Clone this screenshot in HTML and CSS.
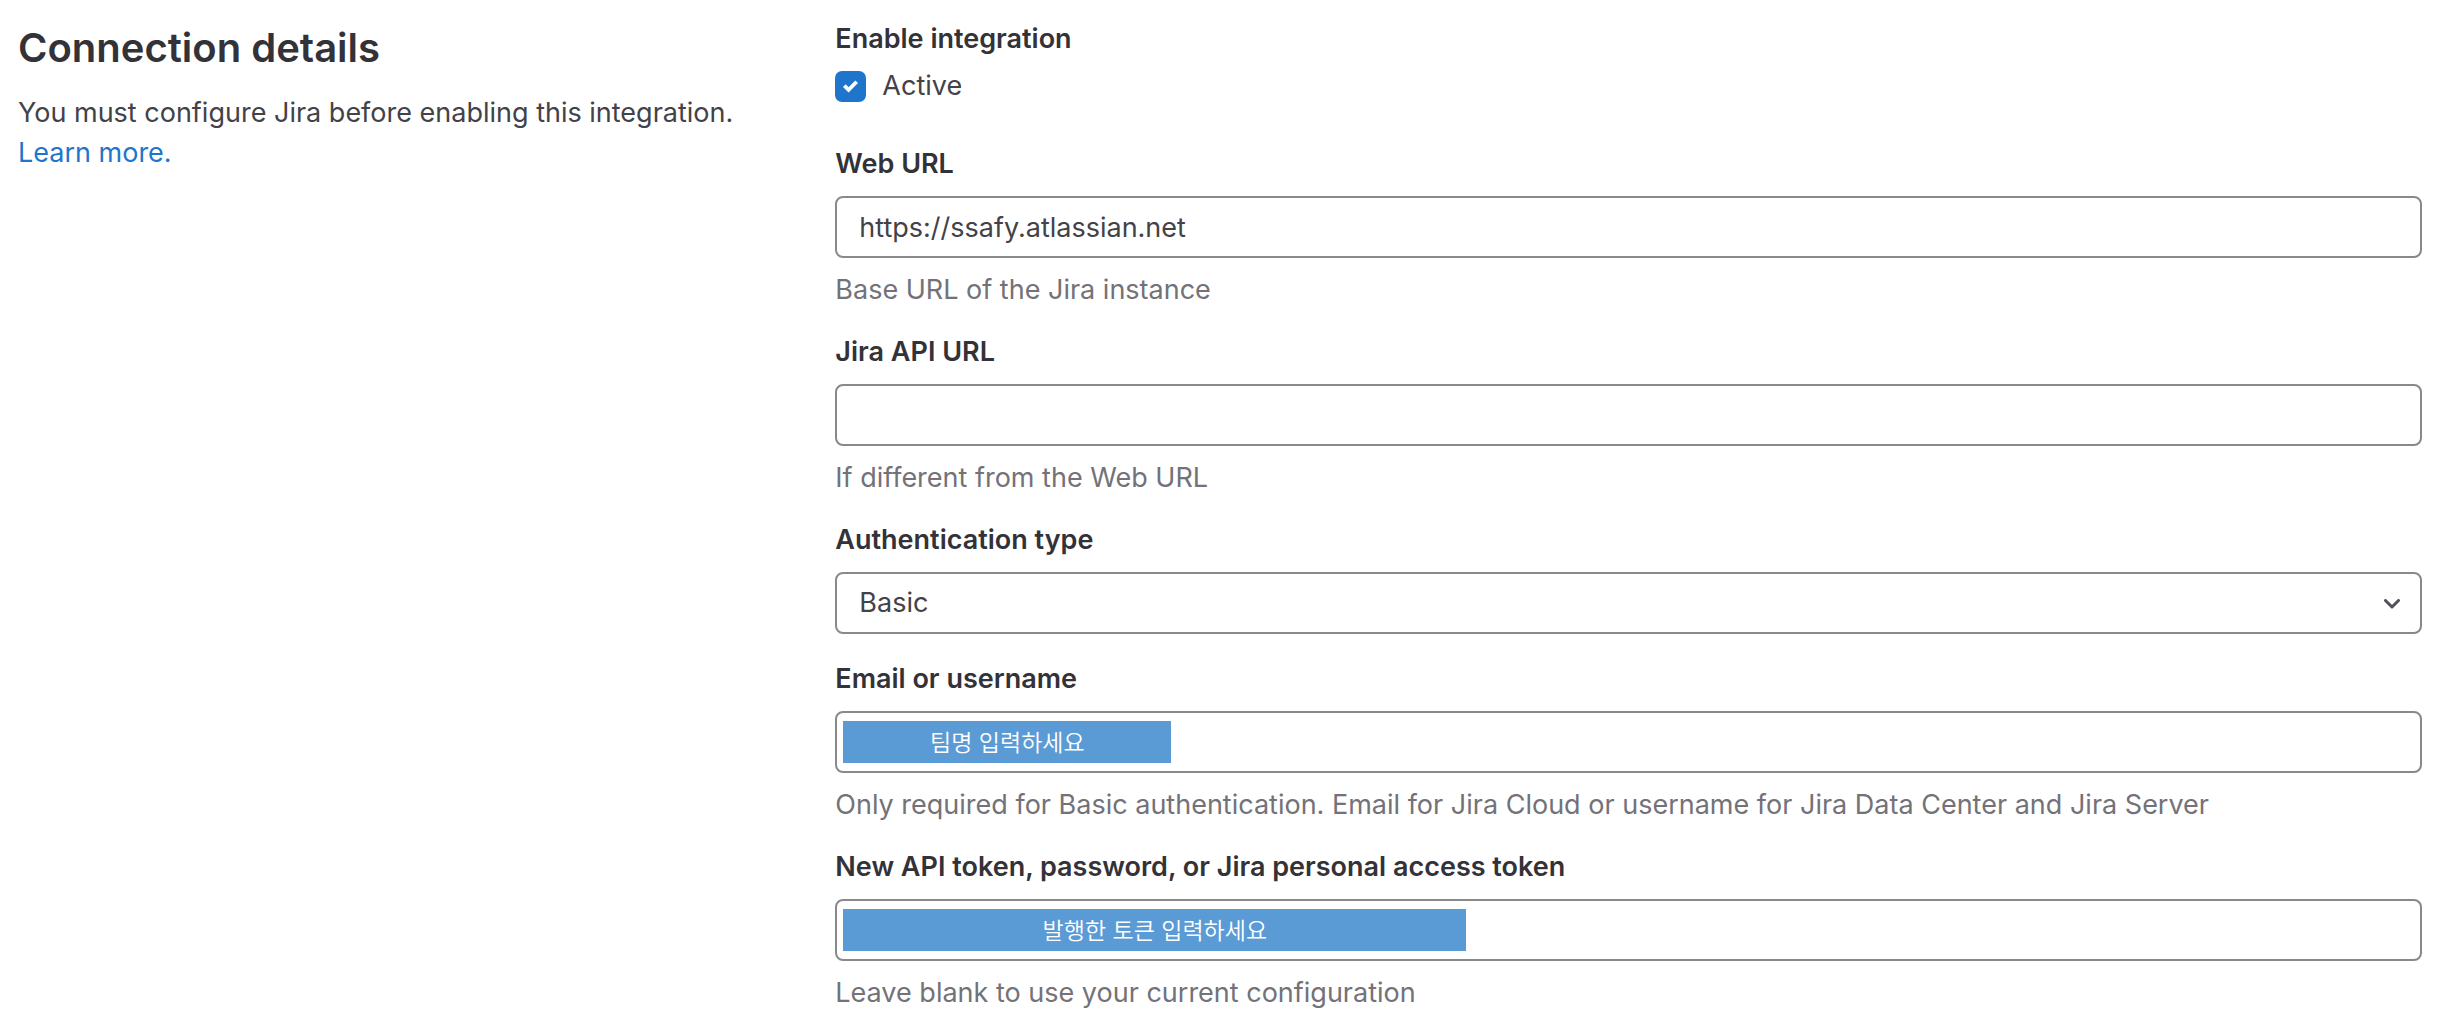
FILE: index.html
```html
<!DOCTYPE html>
<html lang="en">
<head>
<meta charset="utf-8">
<meta name="viewport" content="width=device-width, initial-scale=1">
<title>Jira integration</title>
<link rel="stylesheet" href="styles.css">
</head>
<body>
<main class="settings">
  <section class="intro">
    <h1 class="intro-title">Connection details</h1>
    <p class="intro-text">You must configure Jira before enabling this integration. <a class="link" href="#">Learn more.</a></p>
  </section>
  <form class="fields">
    <fieldset class="toggle">
      <legend class="label">Enable integration</legend>
      <label class="check">
        <span class="check-box">
          <input class="check-input" type="checkbox" checked>
          <svg class="check-mark" viewBox="0 0 8 8" aria-hidden="true"><path d="M6.56.75 2.97 4.35 1.44 2.82 0 4.26l2.97 2.99L8 2.19z" fill="#fff"/></svg>
        </span>
        Active
      </label>
    </fieldset>
    <div class="field">
      <label class="label" for="web-url">Web URL</label>
      <input class="control" id="web-url" type="text" value="https://ssafy.atlassian.net">
      <p class="help">Base URL of the Jira instance</p>
    </div>
    <div class="field">
      <label class="label" for="api-url">Jira API URL</label>
      <input class="control" id="api-url" type="text">
      <p class="help">If different from the Web URL</p>
    </div>
    <div class="field field-plain">
      <label class="label" for="auth-type">Authentication type</label>
      <div class="control-wrap">
        <select class="control" id="auth-type"><option>Basic</option></select>
        <svg class="chevron" viewBox="0 0 16 10" aria-hidden="true"><path d="M1.500 1.500 8 8l6.500-6.500" fill="none" stroke="#535158" stroke-width="3" stroke-linecap="round" stroke-linejoin="round"/></svg>
      </div>
    </div>
    <div class="field">
      <label class="label" for="username">Email or username</label>
      <div class="control-wrap">
        <input class="control" id="username" type="text">
        <span class="note note-short" lang="ko">팀명 입력하세요</span>
      </div>
      <p class="help">Only required for Basic authentication. Email for Jira Cloud or username for Jira Data Center and Jira Server</p>
    </div>
    <div class="field">
      <label class="label" for="token">New API token, password, or Jira personal access token</label>
      <div class="control-wrap">
        <input class="control" id="token" type="password">
        <span class="note note-long" lang="ko">발행한 토큰 입력하세요</span>
      </div>
      <p class="help">Leave blank to use your current configuration</p>
    </div>
  </form>
</main>
</body>
</html>
```
FILE: styles.css
```css
* {
  box-sizing: border-box;
}

body {
  margin: 0;
  background: #fff;
  color: #434248;
  font: 400 27px/40px Inter, "Noto Sans CJK KR", sans-serif;
}

.settings {
  display: grid;
  grid-template-columns: minmax(0, 1fr) minmax(0, 2fr);
  gap: 24px;
  padding: 19px 18px 20px;
}

.intro-title {
  margin: 4px 0 20px;
  color: #333238;
  font-size: 40px;
  font-weight: 600;
  line-height: 50px;
}

.intro-text {
  margin: 0;
}

.link {
  color: #1f75cb;
  text-decoration: none;
}

.fields {
  display: flex;
  flex-direction: column;
  gap: 22px;
}

.toggle {
  min-width: 0;
  margin: 0;
  padding: 0 0 16px;
  border: 0;
}

.label {
  display: block;
  padding: 0;
  color: #333238;
  font-weight: 600;
}

.check {
  display: flex;
  align-items: center;
  gap: 16px;
  margin-top: 7px;
}

.check-box {
  position: relative;
  width: 31px;
  height: 31px;
}

.check-input {
  display: block;
  width: 100%;
  height: 100%;
  margin: 0;
  border-radius: 7px;
  background: #1f75cb;
  appearance: none;
}

.check-mark {
  position: absolute;
  inset: 8px;
  pointer-events: none;
}

.field-plain {
  padding-bottom: 3px;
}

.control-wrap {
  position: relative;
}

.control {
  display: block;
  width: 100%;
  height: 62px;
  margin: 12px 0 0;
  padding: 0 22px;
  border: 2px solid #89888d;
  border-radius: 8px;
  background: #fff;
  color: #434248;
  font: inherit;
  appearance: none;
}

.chevron {
  position: absolute;
  top: 27px;
  right: 22px;
  width: 16px;
  height: 10px;
  pointer-events: none;
}

.note {
  position: absolute;
  top: 10px;
  left: 8px;
  height: 42px;
  background: #5b9bd5;
  color: #fff;
  font: 350 23px/40px "Noto Sans CJK KR", sans-serif;
  text-align: center;
  pointer-events: none;
}

.note-short {
  width: 328px;
}

.note-long {
  width: 623px;
}

.help {
  margin: 12px 0 0;
  color: #737278;
}
```
